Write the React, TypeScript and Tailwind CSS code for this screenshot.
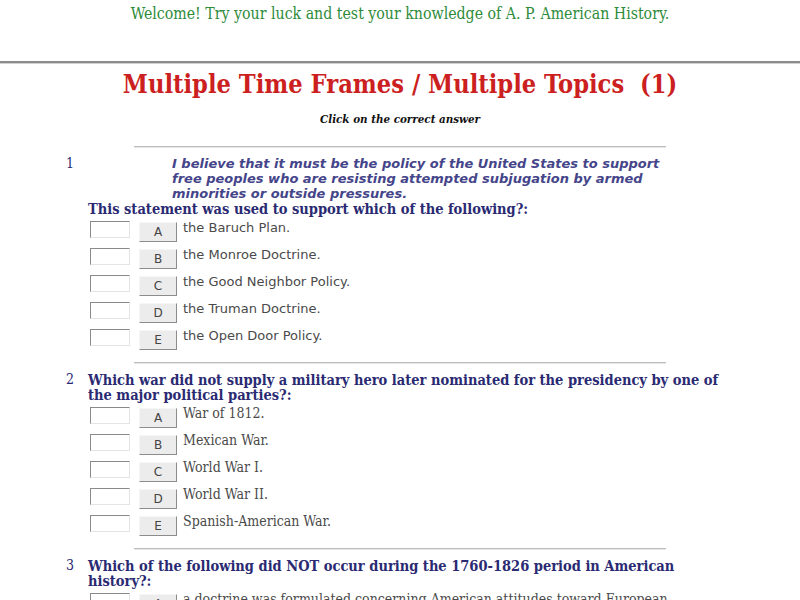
import React from 'react';

type Question = {
  num: number;
  quote?: string;
  stem: string;
  options: string[];
  optFont: 'sans' | 'serif';
};

const questions: Question[] = [
  {
    num: 1,
    quote:
      'I believe that it must be the policy of the United States to support free peoples who are resisting attempted subjugation by armed minorities or outside pressures.',
    stem: 'This statement was used to support which of the following?:',
    options: ['the Baruch Plan.', 'the Monroe Doctrine.', 'the Good Neighbor Policy.', 'the Truman Doctrine.', 'the Open Door Policy.'],
    optFont: 'sans',
  },
  {
    num: 2,
    stem: 'Which war did not supply a military hero later nominated for the presidency by one of the major political parties?:',
    options: ['War of 1812.', 'Mexican War.', 'World War I.', 'World War II.', 'Spanish-American War.'],
    optFont: 'serif',
  },
  {
    num: 3,
    stem: 'Which of the following did NOT occur during the 1760-1826 period in American history?:',
    options: [
      'a doctrine was formulated concerning American attitudes toward European colonization in the Western Hemisphere.',
      'the Articles of Confederation were adopted.',
      'the Louisiana Territory was purchased.',
      'the Missouri Compromise was enacted.',
      'the Mexican War was fought.',
    ],
    optFont: 'serif',
  },
];

const letters = ['A', 'B', 'C', 'D', 'E'];

function Divider() {
  return <div className="mx-auto w-[532px] h-[2px] border-t border-[#bdbdbd] border-b border-b-[#e6e6e6]" />;
}

function OptionRow({ letter, text, optFont }: { letter: string; text: string; optFont: 'sans' | 'serif' }) {
  return (
    <div className="flex items-start min-h-[27px] pl-[90px]">
      <div className="mt-[1px] w-[40px] h-[17px] shrink-0 bg-white border border-t-[#8a8a8a] border-l-[#8a8a8a] border-r-[#e4e4e4] border-b-[#e4e4e4]" />
      <div className="ml-[9px] mt-[2px] w-[38px] h-[20px] shrink-0 flex items-center justify-center bg-[#ececec] border border-t-[#f6f6f6] border-l-[#f6f6f6] border-r-[#8c8c8c] border-b-[#8c8c8c] text-[12px] text-[#444] font-['DejaVu_Sans',sans-serif]">
        {letter}
      </div>
      <div
        className={
          optFont === 'sans'
            ? "ml-[6px] w-[510px] text-[13px] leading-[15px] text-[#4a4a4a] font-['DejaVu_Sans',sans-serif]"
            : "ml-[6px] w-[510px] text-[14px] leading-[15px] text-[#4a4a4a] font-['DejaVu_Serif_Condensed','DejaVu_Serif',serif] font-stretch-condensed"
        }
      >
        {text}
      </div>
    </div>
  );
}

function QuestionBlock({ q }: { q: Question }) {
  return (
    <div className="pt-[8px] pb-[7px]">
      <div className="flex pl-[66px]">
        <div className="w-[22px] shrink-0 text-[14px] leading-[15px] text-[#2a2a72] font-['DejaVu_Serif_Condensed','DejaVu_Serif',serif] font-stretch-condensed">
          {q.num}
        </div>
        <div className="w-[636px]">
          {q.quote && (
            <p className="ml-[84px] w-[500px] text-[13px] leading-[15px] italic font-bold text-[#45458a] font-['DejaVu_Sans',sans-serif]">
              {q.quote}
            </p>
          )}
          <p className="text-[14.5px] leading-[15px] font-semibold text-[#2a2a72] font-['DejaVu_Serif_Condensed','DejaVu_Serif',serif] font-stretch-condensed">
            {q.stem}
          </p>
        </div>
      </div>
      <div className="mt-[4px]">
        {q.options.map((opt, i) => (
          <OptionRow key={i} letter={letters[i]} text={opt} optFont={q.optFont} />
        ))}
      </div>
    </div>
  );
}

export default function App() {
  return (
    <div className="w-[800px] h-[600px] overflow-hidden bg-white font-['DejaVu_Serif',serif]">
      <p className="pt-[6px] text-center text-[15.75px] leading-[16px] text-[#2e8b3a] font-['DejaVu_Serif_Condensed','DejaVu_Serif',serif] font-stretch-condensed">
        Welcome! Try your luck and test your knowledge of A. P. American History.
      </p>
      <div className="mt-[39px] h-[3px] border-t-2 border-[#8c8c8c] border-b border-b-[#d0d0d0]" />
      <h1 className="mt-[5px] text-center text-[25.2px] leading-[30px] font-bold text-[#cc1f1f] font-['DejaVu_Serif_Condensed','DejaVu_Serif',serif] font-stretch-condensed whitespace-pre">
        {'Multiple Time Frames / Multiple Topics  (1)'}
      </h1>
      <p className="mt-[13px] text-center text-[11.5px] leading-[14px] italic font-bold text-[#111] font-['DejaVu_Serif_Condensed','DejaVu_Serif',serif] font-stretch-condensed">
        Click on the correct answer
      </p>
      <div className="mt-[20px]">
        <Divider />
      </div>
      {questions.map((q, i) => (
        <div key={q.num}>
          <QuestionBlock q={q} />
          {i < questions.length - 1 && <Divider />}
        </div>
      ))}
    </div>
  );
}
